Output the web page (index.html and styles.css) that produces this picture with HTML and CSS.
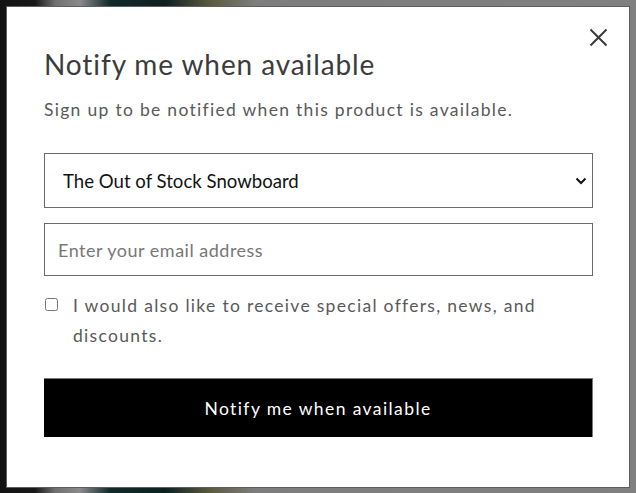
FILE: index.html
```html
<!DOCTYPE html>
<html lang="en">
<head>
<meta charset="utf-8">
<title>Notify me when available</title>
<link rel="stylesheet" href="styles.css">
</head>
<body>
<div class="modal" role="dialog" aria-labelledby="notify-title">
  <button class="close" type="button" aria-label="Close">
    <svg width="19" height="19" viewBox="0 0 19 19" aria-hidden="true">
      <path d="M1.5 1.5 L17.5 17.5 M17.5 1.5 L1.5 17.5" stroke="#3a3a3a" stroke-width="2" fill="none"/>
    </svg>
  </button>
  <h2 id="notify-title" class="title">Notify me when available</h2>
  <p class="subtitle">Sign up to be notified when this product is available.</p>
  <form class="form">
    <div class="select-wrap">
      <select class="field select">
        <option>The Out of Stock Snowboard</option>
      </select>
      <svg class="caret" width="12" height="8" viewBox="0 0 12 8" aria-hidden="true">
        <path d="M1.5 1.5 L6 6 L10.5 1.5" stroke="#111" stroke-width="2" fill="none"/>
      </svg>
    </div>
    <input class="field input" type="email" placeholder="Enter your email address">
    <label class="consent">
      <input class="check" type="checkbox">
      <span class="consent-text">I would also like to receive special offers, news, and discounts.</span>
    </label>
    <button class="submit" type="button">Notify me when available</button>
  </form>
</div>
</body>
</html>
```

FILE: styles.css
```css
html, body {
  margin: 0;
  height: 493px;
}
body {
  box-sizing: border-box;
  padding: 6px 6px 5px 6px;
  background: linear-gradient(to right, #121212 0, #181818 35px, #6f6f6f 55px, #8a8a8a 80px, #122a2c 110px, #0e1f20 165px, #5b5a40 210px, #7d7d7d 255px, #808080 100%);
  font-family: Lato, "Liberation Sans", sans-serif;
  overflow: hidden;
}
.modal {
  position: relative;
  box-sizing: border-box;
  width: 624px;
  height: 482px;
  background: #fff;
  border: 1px solid #5e5e5e;
  padding: 40px 36px 0 37px;
}
.close {
  position: absolute;
  top: 21px;
  right: 21px;
  width: 19px;
  height: 19px;
  padding: 0;
  border: 0;
  background: none;
  display: flex;
}
.title {
  margin: 0;
  font-size: 28px;
  font-weight: 400;
  line-height: 34px;
  letter-spacing: 0.9px;
  color: #3c3c3c;
}
.subtitle {
  margin: 16px 0 0;
  font-size: 17.5px;
  line-height: 25px;
  letter-spacing: 1.3px;
  color: #595959;
}
.form {
  margin-top: 31px;
  display: flex;
  flex-direction: column;
}
.select-wrap {
  position: relative;
  display: flex;
}
.field {
  box-sizing: border-box;
  width: 100%;
  border: 1px solid #6a6a6a;
  background: #fff;
  font-family: Lato, "Liberation Sans", sans-serif;
  outline: none;
  border-radius: 0;
  margin: 0;
}
.select {
  appearance: none;
  -webkit-appearance: none;
  height: 55px;
  padding: 0 40px 0 18px;
  font-size: 18.6px;
  color: #121212;
}
.caret {
  position: absolute;
  right: 6px;
  top: 24px;
  pointer-events: none;
}
.input {
  margin-top: 15px;
  height: 53px;
  padding: 0 13px;
  font-size: 18px;
  letter-spacing: 0.5px;
  color: #121212;
}
.input::placeholder {
  color: #777;
}
.consent {
  margin-top: 15px;
  display: flex;
  align-items: flex-start;
}
.check {
  flex: none;
  width: 13px;
  height: 13px;
  margin: 7px 15px 0 1px;
}
.consent-text {
  font-size: 17.5px;
  line-height: 30px;
  letter-spacing: 1.3px;
  color: #595959;
}
.submit {
  margin-top: 27px;
  height: 59px;
  border: 0;
  border-top: 1px solid #7a7a7a;
  border-right: 1px solid #7a7a7a;
  background: #000;
  color: #fff;
  font-family: Lato, "Liberation Sans", sans-serif;
  font-size: 17.5px;
  letter-spacing: 1.4px;
  padding: 0;
}
```
